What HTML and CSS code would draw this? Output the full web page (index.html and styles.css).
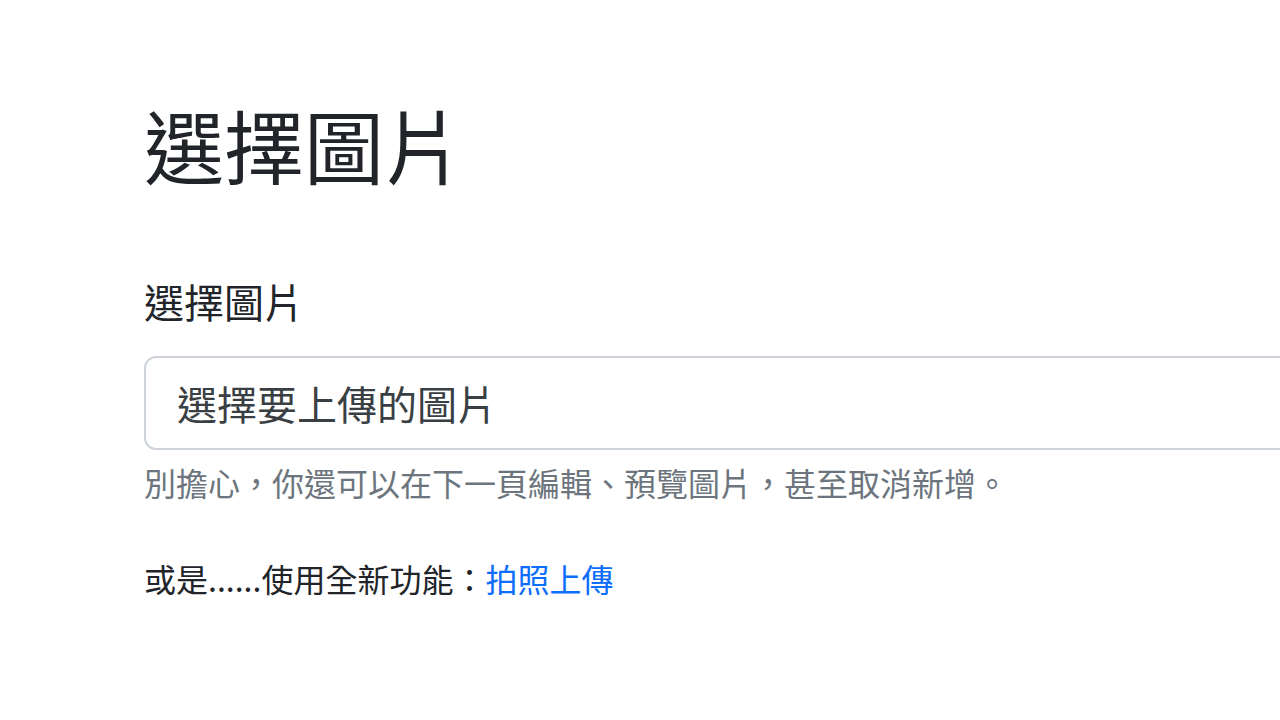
FILE: index.html
```
<!DOCTYPE html>
<html lang="zh-Hant">

<head>
    <meta charset="UTF-8">
    <title>選擇圖片</title>
    <link rel="stylesheet" href="styles.css">
</head>

<body>

    <div class="container">
        <h1 class="page-title">選擇圖片</h1>

        <form class="upload-form">
            <label class="form-label" for="photoInput">選擇圖片</label>
            <div class="file-box">
                <input type="file" id="photoInput" class="file-input" accept="image/*">
                <span class="file-text">選擇要上傳的圖片</span>
            </div>
            <div class="form-text">別擔心，你還可以在下一頁編輯、預覽圖片，甚至取消新增。</div>
        </form>

        <p class="alt-option">或是......使用全新功能：<a href="#">拍照上傳</a></p>
    </div>

</body>

</html>
```

FILE: styles.css
```
html,
body {
    margin: 0;
    overflow: hidden;
}

body {
    font-family: "Noto Sans CJK TC", "Noto Sans", sans-serif;
    background: #fff;
    color: #212529;
}

.container {
    width: 1200px;
    margin-left: 144px;
    padding-top: 95px;
}

.page-title {
    margin: 0;
    font-size: 80px;
    font-weight: 400;
    line-height: 1.2;
}

.upload-form {
    margin-top: 80px;
}

.form-label {
    display: block;
    font-size: 40px;
    line-height: 1.5;
    margin-bottom: 25px;
}

.file-box {
    position: relative;
    box-sizing: border-box;
    height: 94px;
    border: 2px solid #ced4da;
    border-radius: 12px;
    padding: 0 31px;
    display: flex;
    align-items: center;
    font-size: 40px;
    color: #3a3f44;
}

.file-input {
    position: absolute;
    inset: 0;
    opacity: 0;
    cursor: pointer;
}

.form-text {
    margin-top: 8px;
    font-size: 32px;
    line-height: 1.5;
    color: #6c757d;
}

.alt-option {
    margin: 48px 0 0;
    font-size: 32px;
    line-height: 1.5;
}

.alt-option a {
    color: #0d6efd;
    text-decoration: none;
}
```
